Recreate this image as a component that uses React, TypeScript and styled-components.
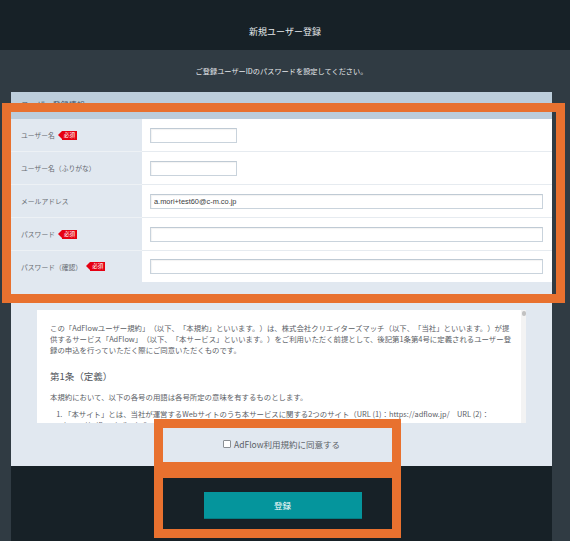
import React from 'react';
import styled, { createGlobalStyle } from 'styled-components';

const GlobalStyle = createGlobalStyle`
  html, body {
    margin: 0;
    padding: 0;
    background: #303b43;
    font-family: "Noto Sans CJK JP", "Noto Sans", sans-serif;
    text-spacing-trim: space-all;
  }
  * {
    box-sizing: border-box;
  }
`;

const Page = styled.div`
  position: relative;
  width: 570px;
  min-height: 541px;
  background: #303b43;
  overflow: hidden;
`;

const Header = styled.header`
  background: #172127;
  height: 50px;
  padding-top: 26px;
  text-align: center;
  color: #e4e8eb;
  font-size: 9px;
  line-height: 12px;
`;

const Main = styled.main`
  padding: 0 18px 0 11px;
`;

const Lead = styled.p`
  margin: 0;
  padding: 16px 0 16px;
  text-align: center;
  color: #e6e9ec;
  font-size: 7.2px;
  line-height: 10px;
`;

const Panel = styled.section`
  background: #e1e8f0;
`;

const PanelTitle = styled.h2`
  margin: 0;
  height: 27px;
  padding: 7px 10px 0;
  background: #bccddb;
  color: #3f5062;
  font-size: 8px;
  line-height: 12px;
  font-weight: 400;
`;

const FormTable = styled.div`
  display: grid;
  grid-template-columns: 131px 1fr;
`;

const LabelCell = styled.div<{ $last?: boolean }>`
  display: flex;
  align-items: center;
  height: ${({ $last }) => ($last ? '31px' : '33px')};
  padding-left: 10px;
  border-bottom: ${({ $last }) => ($last ? 'none' : '1px solid #edf1f5')};
  color: #666b71;
  font-size: 6.8px;
`;

const InputCell = styled.div<{ $last?: boolean }>`
  display: flex;
  align-items: center;
  height: ${({ $last }) => ($last ? '31px' : '33px')};
  padding: 0 9px 0 8px;
  background: #fff;
  border-bottom: ${({ $last }) => ($last ? 'none' : '1px solid #e6ebf0')};
`;

const TextInput = styled.input<{ $wide?: boolean }>`
  width: ${({ $wide }) => ($wide ? '100%' : '87px')};
  height: 15px;
  margin: 0;
  padding: 0 3px;
  border: 1px solid #c9d3dc;
  border-top-color: #bfcad4;
  border-radius: 0;
  background: #fff;
  box-shadow: inset 1px 1px 1px rgba(0, 0, 0, 0.05);
  color: #3a3d40;
  font-family: "Liberation Sans", Arial, sans-serif;
  font-size: 7.4px;
  outline: none;
`;

const Required = styled.span<{ $gap?: number }>`
  position: relative;
  display: inline-flex;
  align-items: center;
  height: 9px;
  margin-left: ${({ $gap }) => $gap ?? 7}px;
  padding: 0 1.5px 0 2px;
  background: #e60012;
  color: #fff;
  font-size: 5.6px;
  line-height: 9px;

  &::before {
    content: '';
    position: absolute;
    left: -4px;
    top: 0;
    border-style: solid;
    border-width: 4.5px 4px 4.5px 0;
    border-color: transparent #e60012 transparent transparent;
  }
`;

const TermsBox = styled.div`
  display: flex;
  margin: 28px 26px 0;
  height: 113px;
  background: #fff;
  overflow: hidden;
`;

const TermsBody = styled.div`
  flex: 1;
  padding: 12px 7px 0 13px;
  color: #5b6066;
  font-size: 7.4px;
  line-height: 11px;

  p {
    margin: 0;
  }
`;

const TermsHeading = styled.h3`
  margin: 14px 0 8px;
  color: #4f545a;
  font-size: 9.5px;
  line-height: 14px;
  font-weight: 400;
`;

const TermsList = styled.ol`
  margin: 6px 0 0;
  padding-left: 14px;
`;

const Scrollbar = styled.div`
  width: 5px;
  background: #f3f3f3;
  padding-top: 1px;
`;

const ScrollThumb = styled.div`
  width: 4px;
  height: 5px;
  margin-left: 0.5px;
  border-radius: 2px;
  background: #c1c1c1;
`;

const AgreeRow = styled.label`
  display: flex;
  align-items: center;
  justify-content: center;
  gap: 3px;
  height: 43px;
  padding-bottom: 2px;
  color: #5b6066;
  font-size: 8.5px;
`;

const CheckBox = styled.span`
  width: 8px;
  height: 8px;
  border: 1px solid #8a8f94;
  border-radius: 1px;
  background: #fff;
`;

const Footer = styled.div`
  display: flex;
  justify-content: center;
  height: 80px;
  padding: 26px 0 0 2px;
  background: #172127;
`;

const SubmitButton = styled.button`
  width: 158px;
  height: 27px;
  border: none;
  border-bottom: 1px solid #047c82;
  background: #05959c;
  color: #fff;
  font-family: "Noto Sans CJK JP", sans-serif;
  font-size: 8.5px;
`;

const Annotation = styled.div<{ $x: number; $y: number; $w: number; $h: number }>`
  position: absolute;
  left: ${({ $x }) => $x}px;
  top: ${({ $y }) => $y}px;
  width: ${({ $w }) => $w}px;
  height: ${({ $h }) => $h}px;
  border: 9px solid #e8712f;
  pointer-events: none;
`;

const rows = [
  { label: 'ユーザー名', required: true, wide: false },
  { label: 'ユーザー名（ふりがな）', required: false, wide: false },
  { label: 'メールアドレス', required: false, wide: true, value: 'a.mori+test60@c-m.co.jp' },
  { label: 'パスワード', required: true, wide: true },
  { label: 'パスワード（確認）', required: true, wide: true, gap: 8 },
];

export default function App() {
  return (
    <Page>
      <GlobalStyle />
      <Header>新規ユーザー登録</Header>
      <Main>
        <Lead>ご登録ユーザーIDのパスワードを設定してください。</Lead>
        <Panel>
          <PanelTitle>ユーザー登録情報</PanelTitle>
          <FormTable>
            {rows.map((row, i) => {
              const last = i === rows.length - 1;
              return (
                <React.Fragment key={row.label}>
                  <LabelCell $last={last}>
                    {row.label}
                    {row.required && <Required $gap={row.gap}>必須</Required>}
                  </LabelCell>
                  <InputCell $last={last}>
                    <TextInput $wide={row.wide} defaultValue={row.value} />
                  </InputCell>
                </React.Fragment>
              );
            })}
          </FormTable>
          <TermsBox>
            <TermsBody>
              <p>
                この「AdFlowユーザー規約」（以下、「本規約」といいます。）は、株式会社クリエイターズマッチ（以下、「当社」といいます。）が提供するサービス「AdFlow」（以下、「本サービス」といいます。）をご利用いただく前提として、後記第1条第4号に定義されるユーザー登録の申込を行っていただく際にご同意いただくものです。
              </p>
              <TermsHeading>第1条（定義）</TermsHeading>
              <p>本規約において、以下の各号の用語は各号所定の意味を有するものとします。</p>
              <TermsList>
                <li>
                  「本サイト」とは、当社が運営するWebサイトのうち本サービスに関する2つのサイト（URL (1)：https://adflow.jp/　URL (2)：https://adflow.jp/login/）をいいます。
                </li>
              </TermsList>
            </TermsBody>
            <Scrollbar>
              <ScrollThumb />
            </Scrollbar>
          </TermsBox>
          <AgreeRow>
            <CheckBox />
            AdFlow利用規約に同意する
          </AgreeRow>
        </Panel>
        <Footer>
          <SubmitButton>登録</SubmitButton>
        </Footer>
      </Main>
      <Annotation $x={2} $y={103} $w={563} $h={200} />
      <Annotation $x={154} $y={419} $w={247} $h={52} />
      <Annotation $x={154} $y={469} $w={247} $h={69} />
    </Page>
  );
}
